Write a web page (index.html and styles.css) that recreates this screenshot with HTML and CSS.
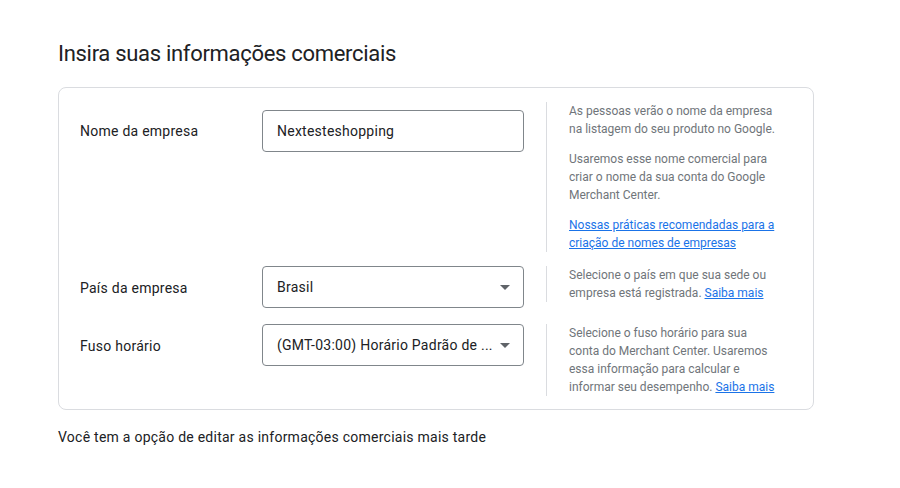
FILE: index.html
```html
<!DOCTYPE html>
<html lang="pt-BR">
<head>
<meta charset="utf-8">
<title>Informações comerciais</title>
<link rel="stylesheet" href="styles.css">
</head>
<body>
<main class="page">
  <h1 class="title">Insira suas informações comerciais</h1>
  <section class="card">
    <div class="row row-first">
      <div class="label">Nome da empresa</div>
      <div class="field">
        <div class="input">Nextesteshopping</div>
      </div>
      <div class="help">
        <p>As pessoas verão o nome da empresa<br>na listagem do seu produto no Google.</p>
        <p>Usaremos esse nome comercial para<br>criar o nome da sua conta do Google<br>Merchant Center.</p>
        <p><a href="#">Nossas práticas recomendadas para a<br>criação de nomes de empresas</a></p>
      </div>
    </div>
    <div class="row">
      <div class="label">País da empresa</div>
      <div class="field">
        <div class="input select"><span class="value">Brasil</span><span class="arrow"></span></div>
      </div>
      <div class="help">
        <p>Selecione o país em que sua sede ou<br>empresa está registrada. <a href="#">Saiba mais</a></p>
      </div>
    </div>
    <div class="row row-last">
      <div class="label">Fuso horário</div>
      <div class="field">
        <div class="input select"><span class="value">(GMT-03:00) Horário Padrão de ...</span><span class="arrow"></span></div>
      </div>
      <div class="help">
        <p>Selecione o fuso horário para sua<br>conta do Merchant Center. Usaremos<br>essa informação para calcular e<br>informar seu desempenho. <a href="#">Saiba mais</a></p>
      </div>
    </div>
  </section>
  <p class="note">Você tem a opção de editar as informações comerciais mais tarde</p>
</main>
</body>
</html>
```

FILE: styles.css
```css
* { box-sizing: border-box; }

html, body {
  margin: 0;
  padding: 0;
  background: #ffffff;
}

body {
  font-family: Roboto, "Liberation Sans", Arial, sans-serif;
  color: #202124;
}

.page {
  padding: 40px 0 0 58px;
  width: 814px;
}

.title {
  margin: 0 0 19px;
  font-size: 22px;
  line-height: 28px;
  font-weight: 400;
  letter-spacing: -0.3px;
  color: #202124;
}

.card {
  width: 756px;
  border: 1px solid #dadce0;
  border-radius: 8px;
  padding: 14px 21px 13px 21px;
  display: flex;
  flex-direction: column;
  gap: 14px;
}

.row {
  display: flex;
  align-items: flex-start;
}

.row-last { margin-top: 2px; }

.label {
  width: 182px;
  flex: none;
  font-size: 14px;
  line-height: 20px;
  letter-spacing: 0.25px;
  margin-top: 12px;
}

.row-first .label { margin-top: 19px; }

.field {
  width: 262px;
  flex: none;
  margin-right: 22px;
}

.row-first .field { padding-top: 8px; }

.input {
  height: 42px;
  border: 1px solid #80868b;
  border-radius: 4px;
  padding: 0 14px;
  display: flex;
  align-items: center;
  font-size: 14px;
  letter-spacing: 0.25px;
  color: #202124;
}

.select .value {
  flex: 1;
  white-space: nowrap;
  overflow: hidden;
}

.arrow {
  width: 0;
  height: 0;
  border-left: 5px solid transparent;
  border-right: 5px solid transparent;
  border-top: 5px solid #5f6368;
  margin-left: 8px;
  margin-right: -1px;
}

.help {
  flex: 1;
  border-left: 1px solid #dadce0;
  padding-left: 22px;
  font-size: 12px;
  line-height: 18px;
  color: #70757a;
}

.help p {
  margin: 0 0 12px;
  white-space: nowrap;
}

.help p:last-child { margin-bottom: 0; }

.help a {
  color: #1a73e8;
  text-decoration: underline;
}

.note {
  margin: 17px 0 0;
  font-size: 14px;
  line-height: 20px;
  letter-spacing: 0.25px;
  color: #202124;
}
```
